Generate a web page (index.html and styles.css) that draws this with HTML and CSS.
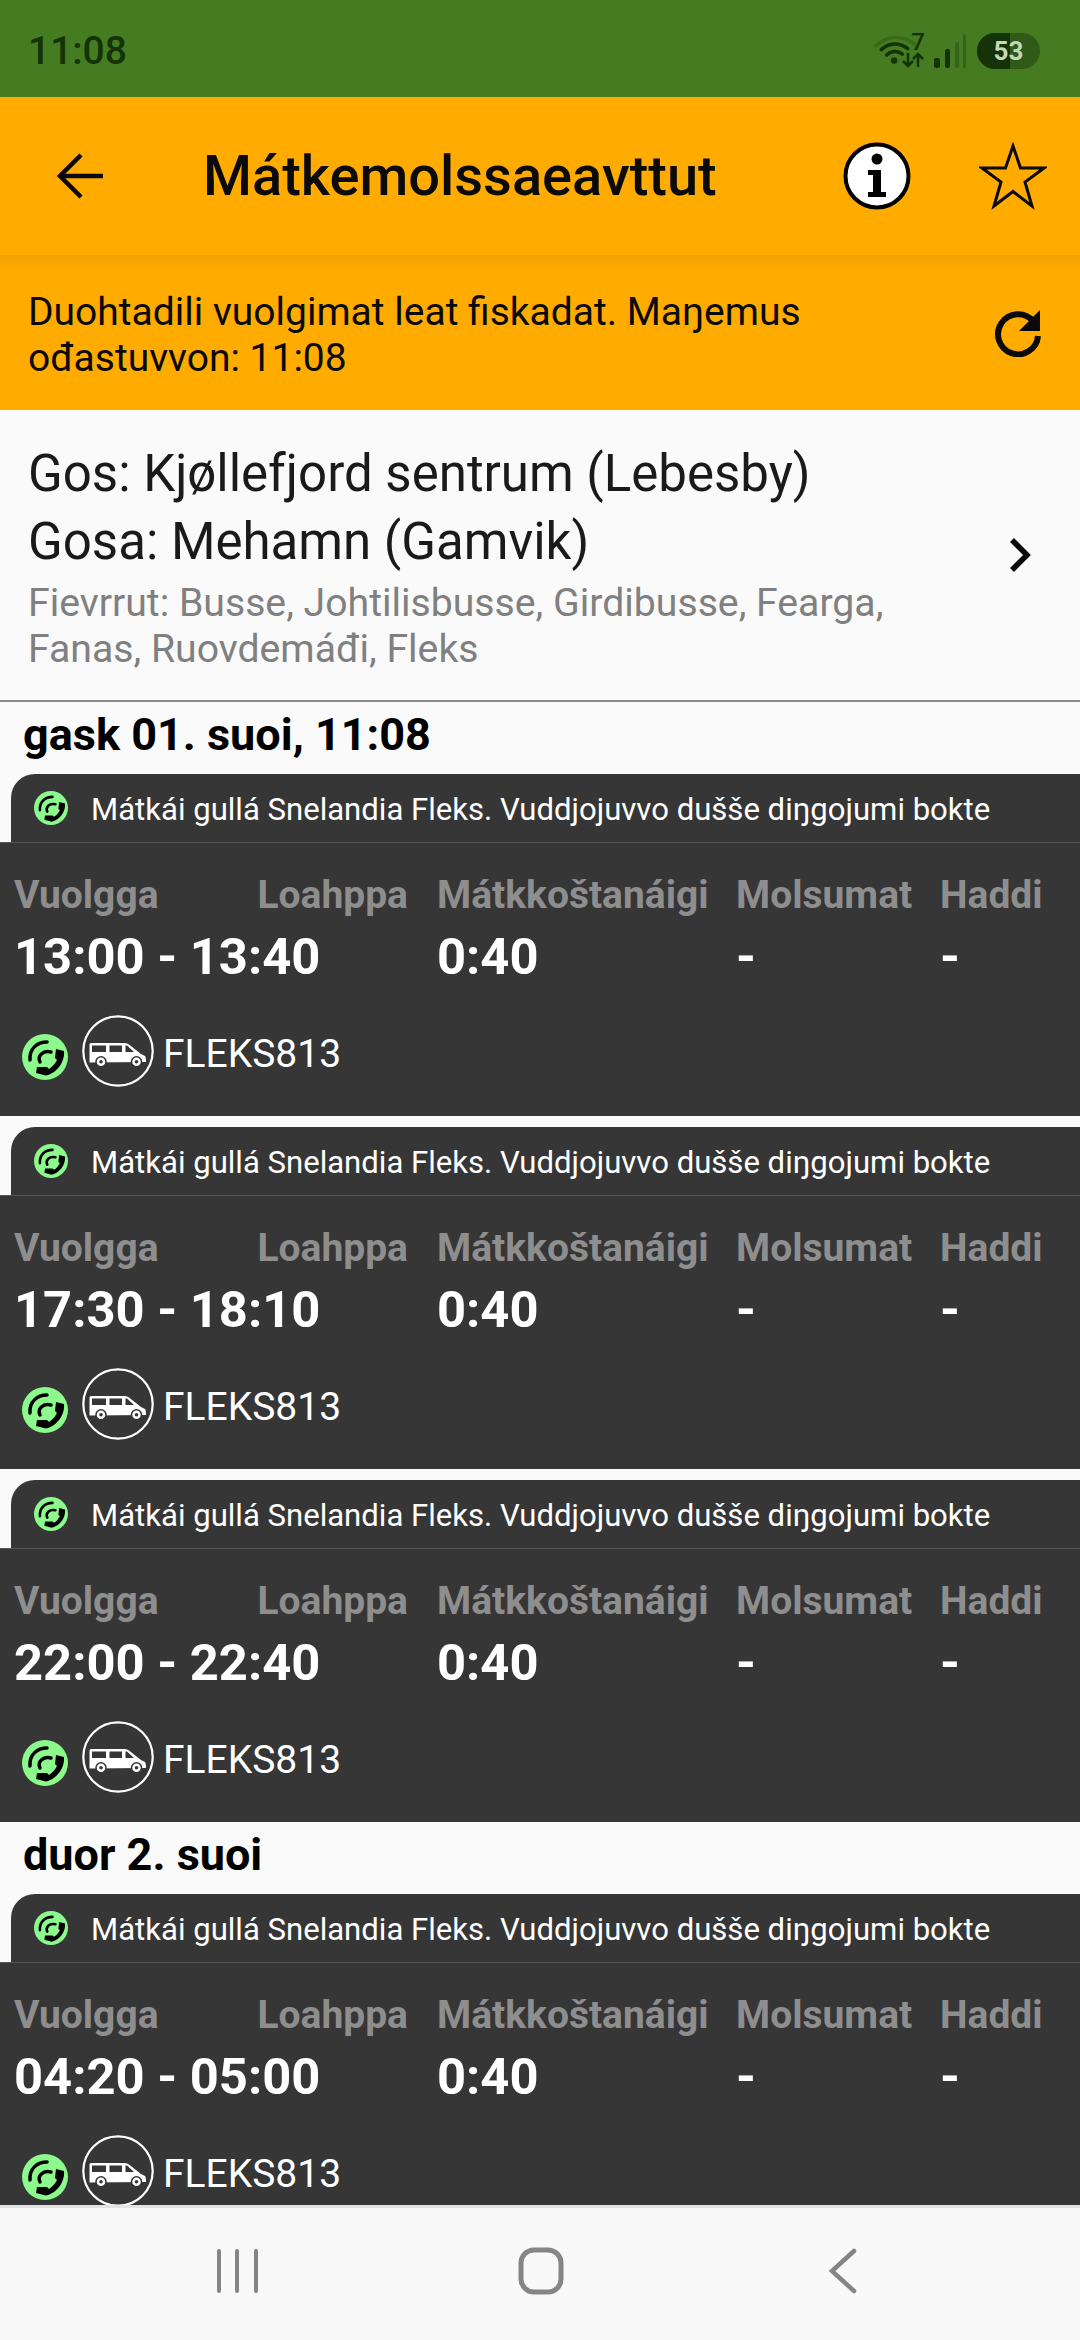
FILE: index.html
```html
<!DOCTYPE html>
<html>
<head>
	<meta charset="utf-8">
	<title>Mátkemolssaeavttut</title>
	<link rel="stylesheet" href="styles.css">
</head>
<body>
	<svg class="defs" width="0" height="0">
		<symbol id="flex" viewBox="0 0 46 46">
			<circle cx="23" cy="23" r="23" fill="#8bf98b"/>
			<path d="M34 15 L42 17 C43 28 35 39 24 41.500 L14 39 L15 33 L25 33 L27 35 C30 33 33 30 35 26 L33 24 Z" fill="#000"/>
			<path d="M8 26 C7 15 15 8 25 8" fill="none" stroke="#000" stroke-width="3.500" stroke-linecap="round"/>
			<path d="M18 28 C15 22 21 16 29 18" fill="none" stroke="#000" stroke-width="3.500" stroke-linecap="round"/>
		</symbol>
		<symbol id="van" viewBox="0 0 72 72">
			<circle cx="36" cy="36" r="34.700" fill="none" stroke="#fff" stroke-width="2.200"/>
			<path d="M7.500 29.500 Q7.500 28 9 28 L43 28 Q45 28 47 29.500 L59 39 L63 41 Q64 42 64 47 L7.500 47.500 Z" fill="#fff"/>
			<path d="M10 30.500 H24 V37 H10 Z M27.500 30.500 H40 V37 H27.500 Z M43.500 30.500 H45 L52 37 H43.500 Z" fill="#363636"/>
			<circle cx="19" cy="46.700" r="5" fill="#fff" stroke="#363636" stroke-width="1.500"/>
			<circle cx="19" cy="46.700" r="1.800" fill="#363636"/>
			<circle cx="54.500" cy="46.700" r="5" fill="#fff" stroke="#363636" stroke-width="1.500"/>
			<circle cx="54.500" cy="46.700" r="1.800" fill="#363636"/>
		</symbol>
	</svg>

	<div class="status">
		<span class="clock">11:08</span>
		<div class="status-icons">
			<svg width="42" height="33" viewBox="0 0 46 36" fill="none" stroke-linecap="round">
				<path d="M2 13 C14 1 32 1 44 11" stroke="#3a6a1c" stroke-width="4"/>
				<path d="M8 17 C17 9 28 9 37 16" stroke="#143306" stroke-width="4"/>
				<path d="M14 23 C19 18 26 18 31 22" stroke="#143306" stroke-width="4"/>
				<circle cx="22" cy="29" r="3.500" fill="#143306"/>
			</svg>
			<div class="net">
				<span class="net-num">7</span>
				<svg width="22" height="16" viewBox="0 0 22 16" fill="none" stroke="#143306" stroke-width="2.500">
					<path d="M6 1 V14 M1 9 L6 14 L11 9 M16 15 V2 M11 7 L16 2 L21 7"/>
				</svg>
			</div>
			<svg class="signal" width="32" height="34" viewBox="0 0 32 34">
				<rect x="0" y="24" width="6" height="10" rx="2" fill="#143306"/>
				<rect x="11" y="15" width="5" height="19" rx="2" fill="#143306"/>
				<rect x="21" y="8" width="4" height="26" rx="2" fill="#35631a"/>
				<rect x="29" y="0" width="3" height="34" rx="1.500" fill="#35631a"/>
			</svg>
			<div class="battery"><span class="battery-level"></span><span class="battery-num">53</span></div>
		</div>
	</div>

	<div class="toolbar">
		<svg class="back" width="46" height="46" viewBox="0 0 46 46" fill="none" stroke="#0a0a0a" stroke-width="4.500">
			<path d="M46 23 H3 M24 2 L3 23 L24 44"/>
		</svg>
		<h1 class="title">Mátkemolssaeavttut</h1>
		<svg class="info" width="68" height="68" viewBox="0 0 68 68">
			<circle cx="34" cy="34" r="31.500" fill="#fff" stroke="#000" stroke-width="4"/>
			<circle cx="34" cy="17" r="5.500" fill="#000"/>
			<path d="M25 28 H38 V50 H43 V55 H25 V50 H30 V33 H25 Z" fill="#000"/>
		</svg>
		<svg class="star" width="68" height="68" viewBox="0 0 68 68">
			<path d="M34 4 L41.500 26 H65 L46 40 L53 64 L34 49.500 L15 64 L22 40 L3 26 H26.500 Z" fill="none" stroke="#0a0a0a" stroke-width="3"/>
		</svg>
	</div>

	<div class="banner">
		<p class="banner-text">Duohtadili vuolgimat leat fiskadat. Maŋemus ođastuvvon: 11:08</p>
		<svg class="refresh" width="48" height="48" viewBox="0 0 48 48" fill="none">
			<path d="M39 12 A20 20 0 1 0 44 27" stroke="#0a0a0a" stroke-width="6"/>
			<path d="M46 1 V22 H25 Z" fill="#0a0a0a"/>
		</svg>
	</div>

	<div class="search">
		<div class="search-text">
			<p class="place">Gos: Kjøllefjord sentrum (Lebesby)</p>
			<p class="place">Gosa: Mehamn (Gamvik)</p>
			<p class="modes">Fievrrut: Busse, Johtilisbusse, Girdibusse, Fearga, Fanas, Ruovdemáđi, Fleks</p>
		</div>
		<svg class="chevron" width="24" height="36" viewBox="0 0 24 36" fill="none" stroke="#0a0a0a" stroke-width="5.500">
			<path d="M4 3 L19 18 L4 33"/>
		</svg>
	</div>

	<div class="list">
		<h2 class="day">gask 01. suoi, 11:08</h2>

		<div class="trip">
			<div class="trip-tab">
				<svg class="tab-icon"><use href="#flex"/></svg>
				<span>Mátkái gullá Snelandia Fleks. Vuddjojuvvo dušše diŋgojumi bokte</span>
			</div>
			<div class="trip-body">
				<div class="cols">
					<div class="col-time">
						<div class="labels"><span>Vuolgga</span><span>Loahppa</span></div>
						<div class="value">13:00 - 13:40</div>
					</div>
					<div class="col-dur"><div class="label">Mátkkoštanáigi</div><div class="value">0:40</div></div>
					<div class="col-change"><div class="label">Molsumat</div><div class="value">-</div></div>
					<div class="col-price"><div class="label">Haddi</div><div class="value">-</div></div>
				</div>
				<div class="line">
					<svg class="line-flex"><use href="#flex"/></svg>
					<svg class="line-van"><use href="#van"/></svg>
					<span>FLEKS813</span>
				</div>
			</div>
		</div>

		<div class="trip">
			<div class="trip-tab">
				<svg class="tab-icon"><use href="#flex"/></svg>
				<span>Mátkái gullá Snelandia Fleks. Vuddjojuvvo dušše diŋgojumi bokte</span>
			</div>
			<div class="trip-body">
				<div class="cols">
					<div class="col-time">
						<div class="labels"><span>Vuolgga</span><span>Loahppa</span></div>
						<div class="value">17:30 - 18:10</div>
					</div>
					<div class="col-dur"><div class="label">Mátkkoštanáigi</div><div class="value">0:40</div></div>
					<div class="col-change"><div class="label">Molsumat</div><div class="value">-</div></div>
					<div class="col-price"><div class="label">Haddi</div><div class="value">-</div></div>
				</div>
				<div class="line">
					<svg class="line-flex"><use href="#flex"/></svg>
					<svg class="line-van"><use href="#van"/></svg>
					<span>FLEKS813</span>
				</div>
			</div>
		</div>

		<div class="trip trip-last">
			<div class="trip-tab">
				<svg class="tab-icon"><use href="#flex"/></svg>
				<span>Mátkái gullá Snelandia Fleks. Vuddjojuvvo dušše diŋgojumi bokte</span>
			</div>
			<div class="trip-body">
				<div class="cols">
					<div class="col-time">
						<div class="labels"><span>Vuolgga</span><span>Loahppa</span></div>
						<div class="value">22:00 - 22:40</div>
					</div>
					<div class="col-dur"><div class="label">Mátkkoštanáigi</div><div class="value">0:40</div></div>
					<div class="col-change"><div class="label">Molsumat</div><div class="value">-</div></div>
					<div class="col-price"><div class="label">Haddi</div><div class="value">-</div></div>
				</div>
				<div class="line">
					<svg class="line-flex"><use href="#flex"/></svg>
					<svg class="line-van"><use href="#van"/></svg>
					<span>FLEKS813</span>
				</div>
			</div>
		</div>

		<h2 class="day">duor 2. suoi</h2>

		<div class="trip">
			<div class="trip-tab">
				<svg class="tab-icon"><use href="#flex"/></svg>
				<span>Mátkái gullá Snelandia Fleks. Vuddjojuvvo dušše diŋgojumi bokte</span>
			</div>
			<div class="trip-body">
				<div class="cols">
					<div class="col-time">
						<div class="labels"><span>Vuolgga</span><span>Loahppa</span></div>
						<div class="value">04:20 - 05:00</div>
					</div>
					<div class="col-dur"><div class="label">Mátkkoštanáigi</div><div class="value">0:40</div></div>
					<div class="col-change"><div class="label">Molsumat</div><div class="value">-</div></div>
					<div class="col-price"><div class="label">Haddi</div><div class="value">-</div></div>
				</div>
				<div class="line">
					<svg class="line-flex"><use href="#flex"/></svg>
					<svg class="line-van"><use href="#van"/></svg>
					<span>FLEKS813</span>
				</div>
			</div>
		</div>
	</div>

	<div class="navbar">
		<svg width="46" height="46" viewBox="0 0 46 46" stroke="#858585" stroke-width="4" stroke-linecap="round">
			<path d="M3 3 V43 M21 3 V43 M40 3 V43"/>
		</svg>
		<svg class="nav-home" width="46" height="48" viewBox="0 0 46 48" fill="none" stroke="#858585" stroke-width="5">
			<rect x="3" y="3" width="40" height="42" rx="13"/>
		</svg>
		<svg width="30" height="46" viewBox="0 0 30 46" fill="none" stroke="#858585" stroke-width="4.500" stroke-linecap="round">
			<path d="M26 3 L4 23 L26 43"/>
		</svg>
	</div>
</body>
</html>
```

FILE: styles.css
```css
*{
	padding: 0;
	margin: 0;
	box-sizing: border-box;
}
body{
	width: 1080px;
	height: 2340px;
	display: flex;
	flex-direction: column;
	overflow: hidden;
	background-color: #fafafa;
	font-family: Roboto, "Noto Sans", sans-serif;
	color: #0a0a0a;
}
.defs{
	position: absolute;
}
.status{
	height: 97px;
	flex: none;
	display: flex;
	align-items: center;
	justify-content: space-between;
	padding: 4px 40px 0 28px;
	background-color: #457b21;
}
.clock{
	font-size: 39px;
	font-weight: 500;
	color: #143306;
}
.status-icons{
	display: flex;
	align-items: center;
}
.net{
	display: flex;
	flex-direction: column;
	align-items: center;
	margin-left: -15px;
	margin-right: 9px;
}
.net-num{
	font-size: 24px;
	font-weight: 500;
	line-height: 19px;
	color: #143306;
	margin-left: 10px;
}
.battery{
	position: relative;
	width: 63px;
	height: 36px;
	margin-left: 11px;
	border-radius: 18px;
	overflow: hidden;
	background-color: #2f5a17;
	text-align: center;
}
.battery-level{
	position: absolute;
	left: 0;
	top: 0;
	bottom: 0;
	width: 33px;
	background-color: #143306;
}
.battery-num{
	position: relative;
	font-size: 26px;
	font-weight: 700;
	line-height: 36px;
	color: #c4d8b8;
}
.toolbar{
	height: 158px;
	flex: none;
	display: flex;
	align-items: center;
	padding: 0 33px 0 57px;
	background-color: #ffab00;
}
.title{
	flex: 1;
	margin-left: 100px;
	font-size: 56px;
	font-weight: 500;
}
.info{
	margin-right: 68px;
}
.banner{
	height: 155px;
	flex: none;
	display: flex;
	align-items: center;
	justify-content: space-between;
	padding: 4px 38px 0 28px;
	background: linear-gradient(#f0a000, #ffab00 14px);
}
.refresh{
	margin-top: -4px;
}
.banner-text{
	width: 860px;
	font-size: 39px;
	line-height: 46px;
}
.search{
	height: 292px;
	flex: none;
	display: flex;
	align-items: center;
	justify-content: space-between;
	padding: 1px 48px 0 28px;
	border-bottom: 2px solid #8a8a8a;
}
.search-text{
	width: 900px;
}
.place{
	font-size: 51px;
	line-height: 68px;
	color: #1a1a1a;
}
.modes{
	margin-top: 4px;
	font-size: 39.2px;
	line-height: 46px;
	color: #808080;
}
.chevron{
	margin-top: -2px;
}
.list{
	flex: 1;
	overflow: hidden;
}
.day{
	height: 72px;
	padding-left: 23px;
	font-size: 45px;
	font-weight: 700;
	line-height: 65px;
	color: #000;
}
.trip{
	margin-bottom: 11px;
}
.trip-last{
	margin-bottom: 0;
}
.trip-tab{
	height: 68px;
	margin-left: 11px;
	display: flex;
	align-items: center;
	padding-left: 23px;
	border-top-left-radius: 24px;
	background-color: #363636;
	color: #fff;
	font-size: 31.1px;
}
.trip-tab span{
	padding-top: 2px;
}
.tab-icon{
	width: 34px;
	height: 34px;
	margin-right: 23px;
}
.trip-body{
	height: 274px;
	padding-top: 27px;
	border-top: 1px solid #555;
	background-color: #363636;
}
.cols{
	display: flex;
	height: 125px;
}
.labels{
	display: flex;
	justify-content: space-between;
}
.labels span, .label{
	font-size: 39px;
	font-weight: 700;
	line-height: 50px;
	color: #8e8e8e;
}
.value{
	font-size: 50.7px;
	font-weight: 700;
	line-height: 68px;
	margin-top: 3px;
	color: #fff;
}
.col-time{
	width: 394px;
	margin-left: 14px;
	margin-right: 29px;
}
.col-dur{
	width: 299px;
}
.col-change{
	width: 204px;
}
.line{
	display: flex;
	align-items: center;
	margin-top: 20px;
	padding-left: 22px;
	font-size: 39px;
	color: #fff;
}
.line span{
	padding-top: 5px;
}
.line-flex{
	width: 46px;
	height: 46px;
	margin-top: 12px;
	margin-right: 14px;
}
.line-van{
	width: 72px;
	height: 72px;
	margin-right: 9px;
}
.navbar{
	height: 135px;
	flex: none;
	display: flex;
	align-items: center;
	justify-content: space-between;
	padding: 0 222px 6px 216px;
	border-top: 3px solid #e4e4e4;
	background-color: #f9f9f9;
}
.nav-home{
	margin-right: 8px;
}
```
